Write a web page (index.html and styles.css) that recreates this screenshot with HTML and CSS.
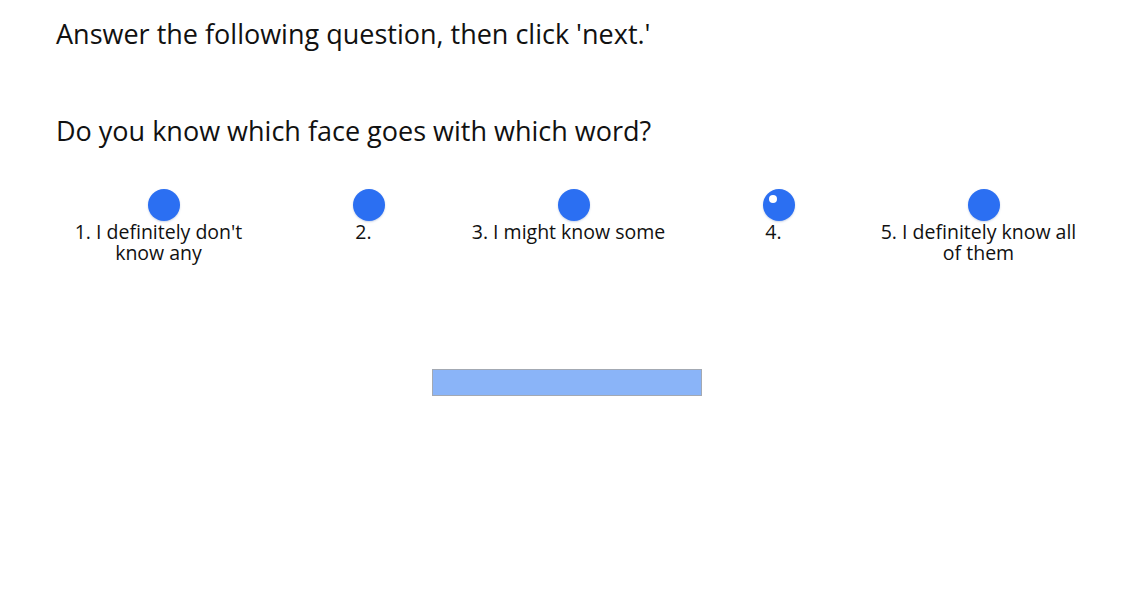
FILE: index.html
```html
<!DOCTYPE html>
<html>
<head>
<meta charset="utf-8">
<link rel="stylesheet" href="styles.css">
</head>
<body>
<main class="page">
  <h1 class="prompt">Answer the following question, then click 'next.'</h1>
  <h2 class="question">Do you know which face goes with which word?</h2>
  <div class="scale">
    <label class="option"><span class="dot"></span><span class="label">1. I definitely don't know any</span></label>
    <label class="option"><span class="dot"></span><span class="label">2.</span></label>
    <label class="option"><span class="dot"></span><span class="label">3. I might know some</span></label>
    <label class="option"><span class="dot selected"></span><span class="label">4.</span></label>
    <label class="option"><span class="dot"></span><span class="label">5. I definitely know all of them</span></label>
  </div>
  <div class="actions"><button class="next" type="button"></button></div>
</main>
</body>
</html>
```
FILE: styles.css
```css
html, body {
  margin: 0;
  padding: 0;
  background: #fff;
}
body {
  font-family: "Open Sans", "DejaVu Sans", sans-serif;
  color: #111;
}
.page {
  width: 1022px;
  padding: 15px 0 0 56px;
}
.prompt, .question {
  margin: 0;
  font-weight: 400;
  font-size: 27px;
  line-height: 37px;
}
.question {
  margin-top: 60px;
}
.scale {
  display: grid;
  grid-template-columns: repeat(5, 205px);
  margin-top: 40px;
}
.option {
  display: flex;
  flex-direction: column;
  align-items: center;
}
.dot {
  width: 32px;
  height: 32px;
  border-radius: 50%;
  background: #2b6ff2;
  margin-left: 11px;
  position: relative;
  box-shadow: 0 1px 2px rgba(40, 80, 160, 0.25);
}
.dot.selected::after {
  content: "";
  position: absolute;
  left: 6px;
  top: 6px;
  width: 8px;
  height: 8px;
  border-radius: 50%;
  background: #fff;
}
.label {
  font-size: 19.5px;
  line-height: 21px;
  text-align: center;
  max-width: 200px;
  margin-top: 0;
}
.actions {
  display: flex;
  justify-content: center;
  margin-top: 106px;
}
.next {
  width: 270px;
  height: 27px;
  background: #8ab4f8;
  border: 1px solid #a3a9b3;
  padding: 0;
  margin: 0;
}
```
